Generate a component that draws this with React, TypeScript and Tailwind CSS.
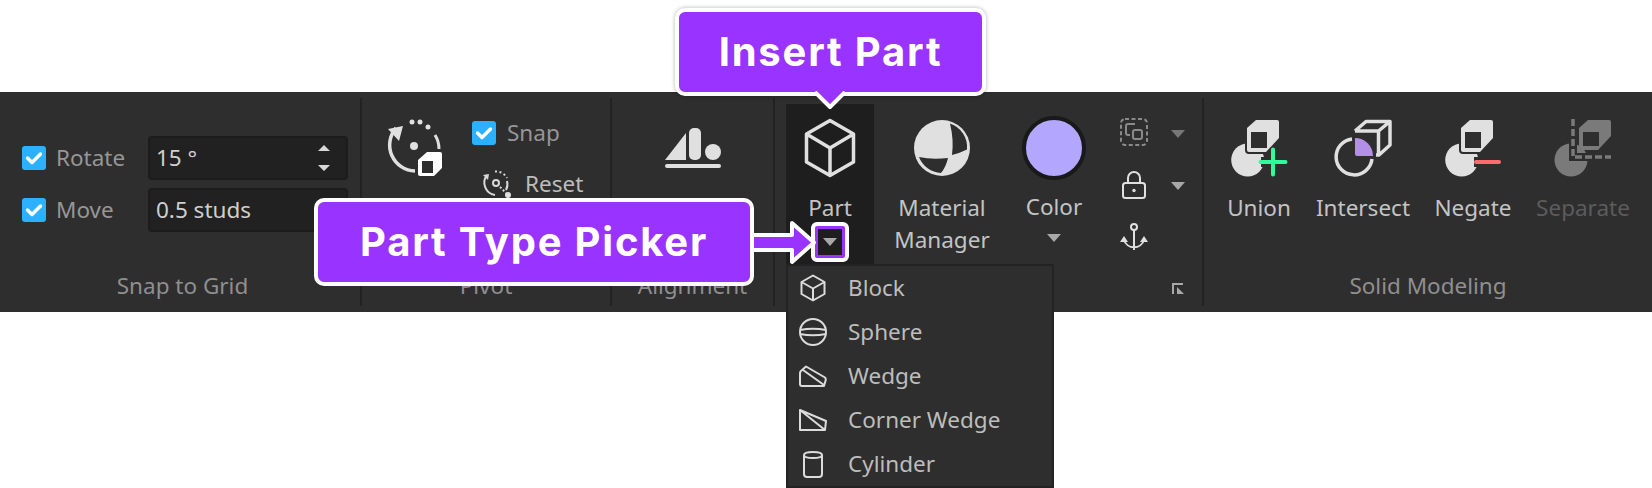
import React from 'react';

const FONT = "font-['Noto_Sans',sans-serif]";

const Caret = ({ className = '' }: { className?: string }) => (
  <svg width="14" height="8" viewBox="0 0 14 8" className={className}>
    <path d="M0 0H14L7 8Z" fill="#a8a8a8" />
  </svg>
);

const Check = () => (
  <div className="flex h-6 w-6 items-center justify-center rounded-[3px] bg-[#2bb1ff]">
    <svg width="18" height="14" viewBox="0 0 18 14">
      <path d="M2.5 7L7 11.5L15.5 3" fill="none" stroke="#fff" strokeWidth="3.5" strokeLinecap="round" strokeLinejoin="round" />
    </svg>
  </div>
);

const NumberInput = ({ value, spinner }: { value: string; spinner?: boolean }) => (
  <div className="flex h-11 w-[200px] items-center justify-between rounded border-2 border-[#1c1c1c] bg-[#212121] pl-[6px] pr-4 text-[22.5px] text-[#cfcfcf]">
    <span>{value}</span>
    {spinner && (
      <svg width="12" height="26" viewBox="0 0 12 26">
        <path d="M0 6L6 0L12 6Z M0 20H12L6 26Z" fill="#d8d8d8" />
      </svg>
    )}
  </div>
);

const Sep = () => <div className="my-[6px] w-[2px] shrink-0 bg-[#222222]" />;

const GroupLabel = ({ children, className = 'left-0' }: { children: React.ReactNode; className?: string }) => (
  <div className={`absolute bottom-[11px] right-0 text-center text-[22.5px] leading-[30px] text-[#8f8f8f] ${className}`}>{children}</div>
);

const CUBE_SOLID = 'M20 12L29 4H50Q52 4 52 6V22L39 36H22Q20 36 20 34Z';

const UnionIcon = () => (
  <svg width="64" height="64" viewBox="0 0 64 64">
    <circle cx="20.7" cy="44" r="16.5" fill="#e0e0e0" />
    <path d={CUBE_SOLID} fill="#e0e0e0" stroke="#2e2e2e" strokeWidth="4" paintOrder="stroke" />
    <rect x="24" y="16" width="16" height="16" fill="#2e2e2e" />
    <path d="M34 46H58M46 34V58" stroke="#2e2e2e" strokeWidth="10" />
    <path d="M33.5 46H58.5M46 33.5V58.5" stroke="#2ffc9a" strokeWidth="4" strokeLinecap="round" />
  </svg>
);

const IntersectIcon = () => (
  <svg width="64" height="64" viewBox="0 0 64 64">
    <path d="M21 23A18 18 0 1 0 41 43" fill="none" stroke="#e0e0e0" strokeWidth="3.5" />
    <path d="M24 22A18 18 0 0 1 42 40H26Q24 40 24 38Z" fill="#b48fe6" />
    <path d="M24 15L35 5.5H59V29L48 39H45M24 15H47.5V39M47.5 15L59 5.5" fill="none" stroke="#e0e0e0" strokeWidth="3.5" strokeLinejoin="round" />
  </svg>
);

const NegateIcon = () => (
  <svg width="64" height="64" viewBox="0 0 64 64">
    <circle cx="20.7" cy="44" r="16.5" fill="#e0e0e0" />
    <path d={CUBE_SOLID} fill="#e0e0e0" stroke="#2e2e2e" strokeWidth="4" paintOrder="stroke" />
    <rect x="24" y="16" width="16" height="16" fill="#2e2e2e" />
    <path d="M33 46H60" stroke="#2e2e2e" strokeWidth="10" />
    <path d="M35 46H58" stroke="#ff6b6e" strokeWidth="4" strokeLinecap="round" />
  </svg>
);

const SeparateIcon = () => (
  <svg width="64" height="64" viewBox="0 0 64 64">
    <circle cx="20" cy="44" r="16.5" fill="#7a7a7a" />
    <path d="M22 4V41H60" fill="none" stroke="#2e2e2e" strokeWidth="8" />
    <path d="M22 3V41H60" fill="none" stroke="#7a7a7a" strokeWidth="3.5" strokeDasharray="7 3" />
    <path d="M28 12L37 4H58Q60 4 60 6V20L47 34H28Z" fill="#7a7a7a" />
    <rect x="32" y="16" width="16" height="14" fill="#2e2e2e" />
  </svg>
);

const PivotIcon = () => (
  <svg width="70" height="70" viewBox="0 0 70 70" className="shrink-0">
    <path d="M16 18A26 26 0 0 0 35 61" fill="none" stroke="#e0e0e0" strokeWidth="3.5" />
    <path d="M8 19L23 16L19 31Z" fill="#e0e0e0" />
    <circle cx="32" cy="12" r="2.5" fill="#e0e0e0" />
    <circle cx="40" cy="12" r="2.5" fill="#e0e0e0" />
    <circle cx="48" cy="17" r="2.5" fill="#e0e0e0" />
    <path d="M55 25A26 26 0 0 1 59 39" fill="none" stroke="#e0e0e0" strokeWidth="3" />
    <circle cx="34" cy="36" r="4" fill="#e0e0e0" />
    <path d="M38 50L47 42H60Q62 42 62 44V58L54 66H40Q38 66 38 64Z" fill="#fff" />
    <rect x="42" y="51" width="11" height="12" fill="#2e2e2e" />
  </svg>
);

const ResetIcon = () => (
  <svg width="32" height="32" viewBox="0 0 32 32">
    <path d="M6 7A12.5 12.5 0 0 0 14 27" fill="none" stroke="#d8d8d8" strokeWidth="2" />
    <path d="M2 7L8 6L7 12Z" fill="#d8d8d8" />
    <path d="M14 3.500A12.500 12.500 0 0 1 26 10" fill="none" stroke="#d8d8d8" strokeWidth="2" strokeDasharray="2 2.500" />
    <path d="M26 13A12.500 12.500 0 0 1 25 22" fill="none" stroke="#d8d8d8" strokeWidth="2" />
    <circle cx="15" cy="15" r="3" fill="none" stroke="#d8d8d8" strokeWidth="2" />
    <path d="M19 19L25 25" stroke="#d8d8d8" strokeWidth="2" strokeDasharray="2 2" />
    <circle cx="27" cy="27" r="3" fill="#e0e0e0" />
  </svg>
);

const AlignIcon = () => (
  <svg width="56" height="40" viewBox="0 0 56 40">
    <path d="M0 32L21 5V32Z" fill="#e0e0e0" />
    <rect x="24" y="0" width="12" height="32" rx="5" fill="#e0e0e0" />
    <circle cx="48" cy="24" r="8" fill="#e0e0e0" />
    <rect x="0" y="36" width="56" height="4" rx="2" fill="#e0e0e0" />
  </svg>
);

const BigCube = () => (
  <svg width="52" height="60" viewBox="0 0 52 60">
    <path d="M26 2.500L49.500 16V44L26 57.500L2.500 44V16Z M2.500 16L26 30L49.500 16 M26 30V57.500" fill="none" stroke="#e0e0e0" strokeWidth="3.500" strokeLinejoin="round" />
  </svg>
);

const MaterialBall = () => (
  <svg width="56" height="56" viewBox="0 0 56 56">
    <circle cx="28" cy="28" r="28" fill="#e0e0e0" />
    <path d="M36 3.500A25 25 0 0 1 53 29.500Q46 33 38 35Q40 20 36 3.500Z" fill="#2e2e2e" />
    <path d="M5 37Q18 40 34 38Q32 47 27 53A25 25 0 0 1 5 37Z" fill="#2e2e2e" />
  </svg>
);

const SelectIcon = () => (
  <svg width="28" height="28" viewBox="0 0 28 28">
    <rect x="1" y="1" width="26" height="26" rx="4" fill="none" stroke="#8a8a8a" strokeWidth="2" strokeDasharray="4 2.500" />
    <path d="M15 6H8Q6 6 6 8V15Q6 17 8 17H10" fill="none" stroke="#8a8a8a" strokeWidth="2" />
    <rect x="13" y="12" width="9" height="9" rx="2" fill="none" stroke="#8a8a8a" strokeWidth="2" />
  </svg>
);

const LockIcon = () => (
  <svg width="24" height="28" viewBox="0 0 24 28">
    <rect x="1" y="12" width="22" height="15" rx="2.500" fill="none" stroke="#e0e0e0" strokeWidth="2" />
    <path d="M6 12V7A6 6 0 0 1 18 7V12" fill="none" stroke="#e0e0e0" strokeWidth="2" />
    <circle cx="12" cy="19.500" r="1.700" fill="#e0e0e0" />
  </svg>
);

const AnchorIcon = () => (
  <svg width="28" height="28" viewBox="0 0 28 28">
    <circle cx="14" cy="4" r="3" fill="none" stroke="#e0e0e0" strokeWidth="2" />
    <path d="M14 7V27M4 17A10.500 10.500 0 0 0 24 17" fill="none" stroke="#e0e0e0" strokeWidth="2" />
    <path d="M0 19L4 13L8 19Z M20 19L24 13L28 19Z" fill="#e0e0e0" />
  </svg>
);

const menuIcons: Record<string, React.ReactNode> = {
  Block: (
    <svg width="26" height="28" viewBox="0 0 26 28">
      <path d="M13 1.500L24.500 8V20L13 26.500L1.500 20V8Z M1.500 8L13 14.500L24.500 8 M13 14.500V26.500" fill="none" stroke="#dcdcdc" strokeWidth="2" strokeLinejoin="round" />
    </svg>
  ),
  Sphere: (
    <svg width="28" height="28" viewBox="0 0 28 28">
      <circle cx="14" cy="14" r="13" fill="none" stroke="#dcdcdc" strokeWidth="2" />
      <path d="M1 12Q14 9.500 27 12M1 16Q14 18.500 27 16" fill="none" stroke="#dcdcdc" strokeWidth="2" />
    </svg>
  ),
  Wedge: (
    <svg width="28" height="22" viewBox="0 0 28 22">
      <path d="M7 1.500L26 12.500Q27.500 14 26 17.500L25 21H3Q1 21 1 19V8Q1 7 2 6Z" fill="none" stroke="#dcdcdc" strokeWidth="2" strokeLinejoin="round" />
      <path d="M4 5L25 20" stroke="#dcdcdc" strokeWidth="2" />
    </svg>
  ),
  'Corner Wedge': (
    <svg width="28" height="22" viewBox="0 0 28 22">
      <path d="M1 1V21H26L27 12Z M1 1L26 21" fill="none" stroke="#dcdcdc" strokeWidth="2" strokeLinejoin="round" />
    </svg>
  ),
  Cylinder: (
    <svg width="20" height="28" viewBox="0 0 20 28">
      <path d="M1 5C1 1 19 1 19 5V24Q19 27 16 27H4Q1 27 1 24Z M1 5C1 9 19 9 19 5" fill="none" stroke="#dcdcdc" strokeWidth="2" />
    </svg>
  ),
};

const menuItems = ['Block', 'Sphere', 'Wedge', 'Corner Wedge', 'Cylinder'];

const ToolColumn = ({ width, icon, label, disabled }: { width: string; icon: React.ReactNode; label: string; disabled?: boolean }) => (
  <div className={`flex ${width} shrink-0 flex-col items-center`}>
    <div className="flex h-[64px] items-center justify-center">{icon}</div>
    <div className={`mt-[12px] text-[22.5px] leading-[32px] ${disabled ? 'text-[#5c5c5c]' : 'text-[#c4c4c4]'}`}>{label}</div>
  </div>
);

export default function App() {
  return (
    <div className={`relative h-[488px] w-[1652px] overflow-hidden bg-white ${FONT}`}>
      <div className="h-[92px]" />

      {/* Ribbon */}
      <div className="flex h-[220px] bg-[#2e2e2e]">
        {/* Snap to Grid */}
        <div className="relative w-[360px] shrink-0 pl-[22px] pt-[44px]">
          <div className="flex h-11 items-center">
            <Check />
            <span className="ml-[10px] w-[92px] text-[22.5px] text-[#969696]">Rotate</span>
            <NumberInput value="15 °" spinner />
          </div>
          <div className="mt-2 flex h-11 items-center">
            <Check />
            <span className="ml-[10px] w-[92px] text-[22.5px] text-[#969696]">Move</span>
            <NumberInput value="0.5 studs" />
          </div>
          <GroupLabel className="left-[5px]">Snap to Grid</GroupLabel>
        </div>
        <Sep />

        {/* Pivot */}
        <div className="relative flex w-[248px] shrink-0 pl-[18px] pt-[18px]">
          <PivotIcon />
          <div className="ml-[22px] flex flex-col">
            <div className="mt-[6px] flex items-center">
              <Check />
              <span className="ml-[11px] text-[22.5px] text-[#969696]">Snap</span>
            </div>
            <div className="ml-[9px] mt-[17px] flex items-center">
              <ResetIcon />
              <span className="ml-[12px] text-[22.5px] text-[#bdbdbd]">Reset</span>
            </div>
          </div>
          <GroupLabel>Pivot</GroupLabel>
        </div>
        <Sep />

        {/* Alignment */}
        <div className="relative flex w-[161px] shrink-0 justify-center pt-[36px]">
          <AlignIcon />
          <GroupLabel>Alignment</GroupLabel>
        </div>
        <Sep />

        {/* Model */}
        <div className="relative flex w-[427px] shrink-0 pl-[11px]">
          <div className="mt-3 flex h-[160px] w-[88px] shrink-0 flex-col items-center bg-[#1e1e1e] pt-[14px]">
            <BigCube />
            <div className="mt-[14px] text-[22.5px] leading-[32px] text-[#c4c4c4]">Part</div>
          </div>
          <div className="flex w-[136px] shrink-0 flex-col items-center pt-[28px]">
            <MaterialBall />
            <div className="mt-[16px] text-center text-[22.5px] leading-[32px] text-[#c4c4c4]">
              Material
              <br />
              Manager
            </div>
          </div>
          <div className="flex w-[88px] shrink-0 flex-col items-center pt-[24px]">
            <div className="h-16 w-16 rounded-full border-4 border-[#191919] bg-[#b3a6ff]" />
            <div className="mt-[11px] text-[22.5px] leading-[32px] text-[#c4c4c4]">Color</div>
            <Caret className="mt-[11px]" />
          </div>
          <div className="ml-[22px] flex w-[28px] shrink-0 flex-col items-center pt-[26px]">
            <SelectIcon />
            <div className="mt-[25px]">
              <LockIcon />
            </div>
            <div className="mt-[24px]">
              <AnchorIcon />
            </div>
          </div>
          <div className="ml-[23px] flex w-[14px] shrink-0 flex-col items-center pt-[38px]">
            <Caret className="opacity-60" />
            <Caret className="mt-[44px]" />
            <svg width="12" height="12" viewBox="0 0 12 12" className="mt-[93px]">
              <path d="M1 11V1H11" fill="none" stroke="#a8a8a8" strokeWidth="2" />
              <path d="M5 4L12 11H5Z" fill="#a8a8a8" />
            </svg>
          </div>
        </div>
        <Sep />

        {/* Solid Modeling */}
        <div className="relative flex flex-1 pl-[3px] pt-[24px]">
          <ToolColumn width="w-[104px]" icon={<UnionIcon />} label="Union" />
          <ToolColumn width="w-[104px]" icon={<IntersectIcon />} label="Intersect" />
          <ToolColumn width="w-[116px]" icon={<NegateIcon />} label="Negate" />
          <ToolColumn width="w-[104px]" icon={<SeparateIcon />} label="Separate" disabled />
          <GroupLabel>Solid Modeling</GroupLabel>
        </div>
      </div>

      {/* Part type dropdown */}
      <div className="absolute left-[786px] top-[264px] h-[224px] w-[268px] border-2 border-[#232323] bg-[#2e2e2e]">
        {menuItems.map((item) => (
          <div key={item} className="flex h-[44px] items-center">
            <div className="flex w-[60px] shrink-0 justify-center pr-[10px]">{menuIcons[item]}</div>
            <span className="text-[22.5px] text-[#bdbdbd]">{item}</span>
          </div>
        ))}
      </div>

      {/* Insert Part callout */}
      <div className="absolute left-[675px] top-[8px] flex h-[88px] w-[311px] items-center justify-center rounded-[10px] border-4 border-white bg-[#9933ff] font-['Inter',sans-serif] text-[40px] font-bold tracking-[1.8px] text-white shadow-[0_0_4px_rgba(0,0,0,0.3)]">
        Insert Part
      </div>
      <svg width="36" height="20" viewBox="0 0 36 20" className="absolute left-[812px] top-[91px]">
        <path d="M3 1L18 16L33 1" fill="#9933ff" stroke="#fff" strokeWidth="4" strokeLinejoin="round" />
      </svg>

      {/* Part Type Picker callout */}
      <div className="absolute left-[811px] top-[222px] h-[40px] w-[38px] rounded-md border-4 border-white bg-[#9933ff] p-[3px]">
        <div className="flex h-full w-full items-center justify-center bg-[#1e1e1e]">
          <Caret />
        </div>
      </div>
      <svg width="74" height="50" viewBox="0 0 74 50" className="absolute left-[748px] top-[217px]">
        <path d="M2 18H44V6L66 25.500L44 45V33H2Z" fill="#9933ff" stroke="#fff" strokeWidth="4" strokeLinejoin="round" />
      </svg>
      <div className="absolute left-[314px] top-[198px] flex h-[88px] w-[440px] items-center justify-center rounded-[10px] border-4 border-white bg-[#9933ff] font-['Inter',sans-serif] text-[40px] font-bold tracking-[1.8px] text-white">
        Part Type Picker
      </div>
    </div>
  );
}
